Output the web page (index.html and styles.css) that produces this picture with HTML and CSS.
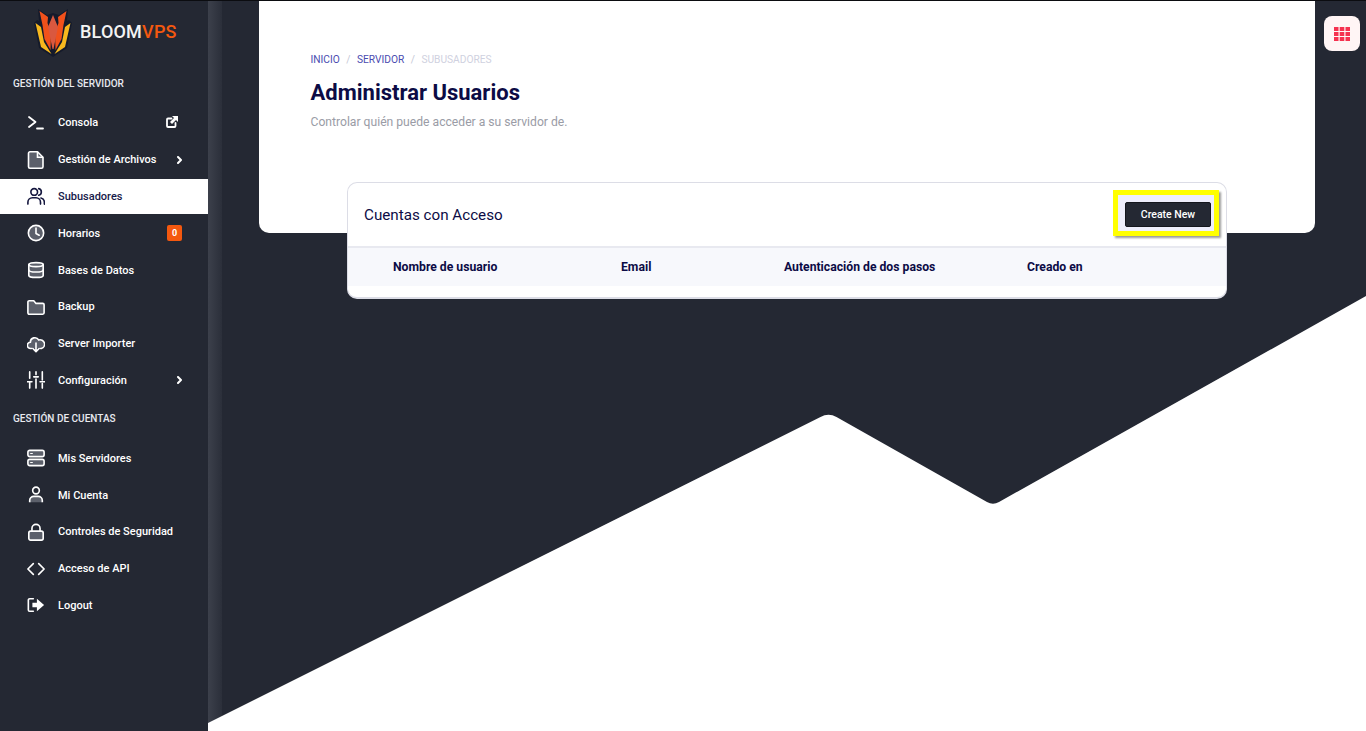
FILE: index.html
```html
<!DOCTYPE html>
<html lang="es">
<head>
<meta charset="utf-8">
<title>Administrar Usuarios</title>
<link rel="stylesheet" href="styles.css">
</head>
<body>
<div class="app">
  <aside class="sidebar">
    <div class="logo">
      <svg class="logo-mark" viewBox="0 0 38 48" width="38" height="48">
        <path d="M19 48 L5 39 L0 14 L3 11 L5 12 L4 0 L13 6 L19 4 L25 6 L34 0 L33 12 L35 11 L38 14 L33 39Z" fill="#141a2b"/>
        <path d="M1.500 14 L7 18 L10 33 L17.500 45 L7 38 Z" fill="#f7b81e"/>
        <path d="M36.500 14 L31 18 L28 33 L20.500 45 L31 38 Z" fill="#f7b81e"/>
        <path d="M5.500 2 L14 8 L13.500 14 L17 24 L16.500 41 L10.500 30 L8.500 16 Z" fill="#f1511b"/>
        <path d="M32.500 2 L24 8 L24.500 14 L21 24 L21.500 41 L27.500 30 L29.500 16 Z" fill="#f1511b"/>
        <path d="M19 6 L24 18 L19.500 40 H18.500 L14 18 Z" fill="#d9583f"/>
      </svg>
      <span class="logo-text">BLOOM<span class="logo-accent">VPS</span></span>
    </div>
    <div class="section-title first">GESTIÓN DEL SERVIDOR</div>
    <nav class="nav">
      <a class="item"><span class="ic"><svg viewBox="0 0 18 18"><path d="M2 3l6.500 5L2 13M10 14.500h6" class="ln"/></svg></span><span class="label">Consola</span><svg class="ext" viewBox="0 0 12 12"><path d="M5.500 2.500H2A1 1 0 0 0 1 3.500v6.500a1 1 0 0 0 1 1h6.500a1 1 0 0 0 1-1V7" class="ln"/><path d="M6 0h6v6l-2-2-4 4-2-2 4-4z" fill="#fff"/></svg></a>
      <a class="item"><span class="ic"><svg viewBox="0 0 18 18"><path d="M3 0.800h7.500L16 6.300v9.400a1.500 1.500 0 0 1-1.500 1.500h-11.500A1.500 1.500 0 0 1 1.500 15.700V2.300A1.500 1.500 0 0 1 3 0.800z" fill="#5c606b" stroke="#fff" stroke-width="1.600" stroke-linejoin="round"/><path d="M10.500 0.800v5.500H16" fill="none" stroke="#fff" stroke-width="1.600"/></svg></span><span class="label">Gestión de Archivos</span><svg class="chev" viewBox="0 0 5 8"><path d="M1 1l3 3-3 3" class="ln bold"/></svg></a>
      <a class="item active"><span class="ic"><svg viewBox="0 0 20 20"><circle cx="8" cy="5.500" r="3.700" class="ln dark"/><path d="M1 19v-2a5 5 0 0 1 5-5h4a5 5 0 0 1 5 5v2M13 1.800a3.800 3.800 0 0 1 0 7.400M15.500 12.200a5 5 0 0 1 3.800 4.800v2" class="ln dark"/></svg></span><span class="label">Subusadores</span></a>
      <a class="item"><span class="ic"><svg viewBox="0 0 20 20"><circle cx="10" cy="10" r="8.500" fill="#5c606b" stroke="#fff" stroke-width="1.800"/><path d="M10 4.500V10.500l3.500 2" class="ln"/></svg></span><span class="label">Horarios</span><span class="badge">0</span></a>
      <a class="item"><span class="ic"><svg viewBox="0 0 20 20"><path d="M2 4c0-3 16-3 16 0v12c0 3-16 3-16 0z" fill="#5c606b" stroke="#fff" stroke-width="1.800"/><path d="M2 4c0 3 16 3 16 0M2 10c0 3 16 3 16 0" class="ln"/></svg></span><span class="label">Bases de Datos</span></a>
      <a class="item"><span class="ic"><svg viewBox="0 0 20 20"><path d="M1 4.500A1.500 1.500 0 0 1 2.500 3h5L10 6h7.500A1.500 1.500 0 0 1 19 7.500v9a1.500 1.500 0 0 1-1.500 1.500h-15A1.500 1.500 0 0 1 1 16.500z" fill="#5c606b" stroke="#fff" stroke-width="1.800" stroke-linejoin="round"/></svg></span><span class="label">Backup</span></a>
      <a class="item"><span class="ic"><svg viewBox="0 0 20 20"><path d="M5 15H4a3.500 3.500 0 0 1-.3-7A5 5 0 0 1 13 5.500 4.500 4.500 0 0 1 16 15h-1" fill="#5c606b" stroke="#fff" stroke-width="1.800" stroke-linecap="round"/><path d="M10 9v9M6.500 15l3.500 3.500 3.500-3.500" class="ln"/></svg></span><span class="label">Server Importer</span></a>
      <a class="item"><span class="ic"><svg viewBox="0 0 20 20"><path d="M3 1v7M3 12v7M10 1v3M10 9v10M17 1v9M17 14v5M0.500 12h5M7.500 6.500h5M14.500 12h5" class="ln"/></svg></span><span class="label">Configuración</span><svg class="chev" viewBox="0 0 5 8"><path d="M1 1l3 3-3 3" class="ln bold"/></svg></a>
    </nav>
    <div class="section-title second">GESTIÓN DE CUENTAS</div>
    <nav class="nav">
      <a class="item"><span class="ic"><svg viewBox="0 0 20 20"><rect x="1" y="1.500" width="18" height="7" rx="2" fill="#5c606b" stroke="#fff" stroke-width="1.800"/><rect x="1" y="11.500" width="18" height="7" rx="2" fill="#5c606b" stroke="#fff" stroke-width="1.800"/><path d="M4 5h2M4 15h2" class="ln thin"/></svg></span><span class="label">Mis Servidores</span></a>
      <a class="item"><span class="ic"><svg viewBox="0 0 20 20"><circle cx="10" cy="5" r="3.700" class="ln"/><path d="M3 18v-2a4.500 4.500 0 0 1 4.500-4.500h5A4.500 4.500 0 0 1 17 16v2" fill="#5c606b" stroke="#fff" stroke-width="1.800"/></svg></span><span class="label">Mi Cuenta</span></a>
      <a class="item"><span class="ic"><svg viewBox="0 0 20 20"><rect x="2" y="9" width="16" height="10" rx="2" fill="#5c606b" stroke="#fff" stroke-width="1.800"/><path d="M5.500 9V6a4.500 4.500 0 0 1 9 0v3" class="ln"/></svg></span><span class="label">Controles de Seguridad</span></a>
      <a class="item"><span class="ic"><svg viewBox="0 0 20 20"><path d="M7 4l-6 6 6 6M13 4l6 6-6 6" class="ln"/></svg></span><span class="label">Acceso de API</span></a>
      <a class="item"><span class="ic"><svg viewBox="0 0 20 20"><path d="M7 3H3a1.500 1.500 0 0 0-1.500 1.500v11A1.500 1.500 0 0 0 3 17h4" class="ln"/><path d="M6 7.500h5V3l8 7-8 7v-4.500H6z" fill="#fff"/></svg></span><span class="label">Logout</span></a>
    </nav>
  </aside>
  <div class="edge"></div>
  <main class="main">
    <svg class="bg" viewBox="0 0 1158 731" width="1158" height="731" preserveAspectRatio="none">
      <path d="M0 723 L612.500 417 Q620.500 412.500 628.500 417 L779 502 Q785 505.500 791 502 L1158 296 V731 H0Z" fill="#fff"/>
    </svg>
    <section class="hero">
      <div class="crumbs"><span class="crumb">INICIO</span><span class="sep">/</span><span class="crumb">SERVIDOR</span><span class="sep">/</span><span class="crumb current">SUBUSADORES</span></div>
      <h1 class="title">Administrar Usuarios</h1>
      <p class="subtitle">Controlar quién puede acceder a su servidor de.</p>
    </section>
    <section class="card">
      <header class="card-head">
        <h2 class="card-title">Cuentas con Acceso</h2>
        <span class="hl"><button class="btn">Create New</button></span>
      </header>
      <div class="table-head">
        <span class="th c1">Nombre de usuario</span>
        <span class="th c2">Email</span>
        <span class="th c3">Autenticación de dos pasos</span>
        <span class="th c4">Creado en</span>
      </div>
    </section>
    <button class="apps" aria-label="Apps">
      <svg viewBox="0 0 16 14" width="16" height="14"><path d="M0 0h4.500v4H0zM5.700 0h4.600v4H5.700zM11.500 0H16v4h-4.500zM0 5h4.500v4H0zM5.700 5h4.600v4H5.700zM11.500 5H16v4h-4.500zM0 10h4.500v4H0zM5.700 10h4.600v4H5.700zM11.500 10H16v4h-4.500z" fill="#f5314f"/></svg>
    </button>
  </main>
</div>
</body>
</html>
```

FILE: styles.css
```css
* { box-sizing: border-box; }
html, body { margin: 0; height: 100%; overflow: hidden; }
body { font-family: Roboto, "Liberation Sans", sans-serif; background: #242833; }
.app { display: flex; height: 731px; border-top: 1px solid #0b0c10; }

.sidebar { width: 208px; flex: none; background: #242833; color: #fff; }
.logo { display: flex; align-items: center; gap: 8px; height: 56px; padding: 0 0 0 34px; margin-top: 2px; }
.logo-mark { flex: none; width: 38px; height: 48px; margin-top: 3px; }
.logo-text { font-family: Roboto, sans-serif; font-size: 18px; letter-spacing: 0.200px; font-weight: 500; color: #f4f4f4; }
.logo-accent { color: #f4580f; }
.section-title { font-size: 10px; font-weight: 500; padding-left: 13px; line-height: 14px; color: #e8eaf0; }
.section-title.first { margin-top: 18px; }
.section-title.second { margin-top: 14.200px; }
.nav { display: flex; flex-direction: column; gap: 1.800px; }
.section-title.first + .nav { margin-top: 14.400px; }
.section-title.second + .nav { margin-top: 14.600px; }
.item { display: flex; align-items: center; height: 35px; padding-left: 27px; font-size: 11px; font-weight: 500; color: #fff; }
.item.active { background: #fff; color: #171a4a; }
.ic { width: 18px; height: 18px; flex: none; margin-right: 13px; display: block; }
.ic svg { width: 18px; height: 18px; display: block; }
.ln { fill: none; stroke: #fff; stroke-width: 1.800; stroke-linecap: round; stroke-linejoin: round; }
.ln.thin { stroke-width: 1.200; }
.ln.bold { stroke-width: 2; }
.ln.dark { stroke: #16183f; }
.label { flex: 1; }
.ext { width: 12px; height: 12px; margin-right: 30px; margin-top: -2px; }
.chev { width: 5px; height: 8px; margin-right: 26px; }
.badge { width: 15px; height: 16px; background: #f4580f; color: #fff; border-radius: 2px; font-size: 9px; font-weight: 700; display: flex; align-items: center; justify-content: center; margin-right: 26px; }

.edge { width: 14px; flex: none; background: linear-gradient(90deg, #3c404b, #2b2f3a); }
.main { flex: 1; position: relative; padding-left: 37px; }
.bg { position: absolute; left: -14px; top: -1px; }
.hero { position: relative; width: 1056px; height: 232px; background: #fff; border-radius: 0 0 10px 10px; padding: 52px 51.500px 0; }
.crumbs { display: flex; gap: 6.500px; font-size: 10.200px; line-height: 14px; color: #c5c8d6; }
.crumb { color: #4a4bb0; }
.crumb.current { color: #cfd1e0; }
.sep { color: #c5c8d6; }
.title { margin: 11px 0 0; font-size: 22px; line-height: 30px; font-weight: 700; color: #0c0b45; }
.subtitle { margin: 6px 0 0; font-size: 12.150px; line-height: 17px; color: #9a9ca6; font-weight: 400; }

.card { position: relative; width: 880px; margin: -51px 0 0 88px; background: #fff; border: 1px solid #dcdde6; border-bottom-width: 2px; border-radius: 10px; height: 117px; overflow: hidden; }
.card-head { display: flex; align-items: center; justify-content: space-between; height: 65px; padding: 0 7px 0 16px; border-bottom: 2px solid #e8e9f0; }
.card-title { margin: 1px 0 0; font-size: 15.200px; font-weight: 400; color: #0c0b45; }
.hl { display: block; border: 5px solid #ff0; padding: 7px; background: #eeeefc; box-shadow: 2px 2px 2px rgba(0,0,0,.4); height: 46px; width: 106px; margin-bottom: 4px; }
.btn { display: block; font-family: inherit; width: 86px; height: 25px; padding: 0; background: #242833; color: #fff; border: 1px solid #14161d; border-radius: 2px; font-size: 10.500px; font-weight: 500; }
.table-head { height: 38px; background: #f7f8fc; font-size: 12.200px; font-weight: 700; color: #0c0b45; position: relative; }
.th { position: absolute; top: 12px; line-height: 14px; }
.c1 { left: 45px; }
.c2 { left: 273px; }
.c3 { left: 436px; }
.c4 { left: 679px; }

.apps { position: absolute; top: 15px; right: 6px; width: 36px; height: 35px; padding: 0; border: 0; background: #fff5f5; border-radius: 8px; display: flex; align-items: center; justify-content: center; }
```
